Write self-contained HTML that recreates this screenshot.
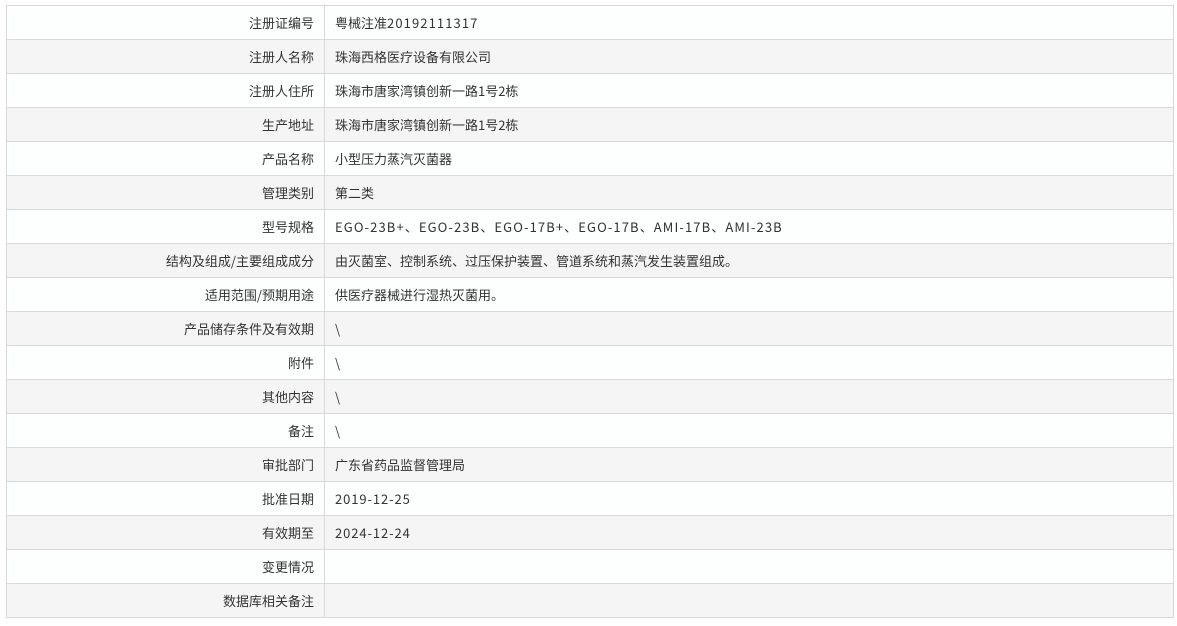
<!DOCTYPE html><html><head><meta charset="utf-8"><style>
body{margin:0;background:#fff;}
table{position:absolute;left:6px;top:5px;width:1168px;border-collapse:collapse;font-family:"Noto Sans CJK SC","Liberation Sans",sans-serif;font-size:13px;color:#333;}
tr{height:34px;}
td{border:1px solid #d9d9d9;padding:0 10px;line-height:16px;}
td:first-child{width:297px;text-align:right;}
.l{letter-spacing:1.1px}
.d{letter-spacing:0.9px}
tr:nth-child(odd){background:#fdfefe}
tr:nth-child(even){background:#f5f5f5}
</style></head><body><table>
<tr><td>注册证编号</td><td>粤械注准<span class="l">20192111317</span></td></tr>
<tr><td>注册人名称</td><td>珠海西格医疗设备有限公司</td></tr>
<tr><td>注册人住所</td><td>珠海市唐家湾镇创新一路1号2栋</td></tr>
<tr><td>生产地址</td><td>珠海市唐家湾镇创新一路1号2栋</td></tr>
<tr><td>产品名称</td><td>小型压力蒸汽灭菌器</td></tr>
<tr><td>管理类别</td><td>第二类</td></tr>
<tr><td>型号规格</td><td class="l">EGO-23B+、EGO-23B、EGO-17B+、EGO-17B、AMI-17B、AMI-23B</td></tr>
<tr><td>结构及组成/主要组成成分</td><td>由灭菌室、控制系统、过压保护装置、管道系统和蒸汽发生装置组成。</td></tr>
<tr><td>适用范围/预期用途</td><td>供医疗器械进行湿热灭菌用。</td></tr>
<tr><td>产品储存条件及有效期</td><td>\</td></tr>
<tr><td>附件</td><td>\</td></tr>
<tr><td>其他内容</td><td>\</td></tr>
<tr><td>备注</td><td>\</td></tr>
<tr><td>审批部门</td><td>广东省药品监督管理局</td></tr>
<tr><td>批准日期</td><td class="d">2019-12-25</td></tr>
<tr><td>有效期至</td><td class="d">2024-12-24</td></tr>
<tr><td>变更情况</td><td></td></tr>
<tr><td>数据库相关备注</td><td></td></tr>
</table></body></html>
